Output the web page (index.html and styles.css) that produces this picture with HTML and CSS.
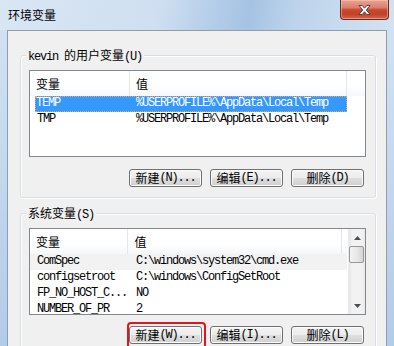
FILE: index.html
```html
<!DOCTYPE html>
<html lang="zh-CN">
<head>
<meta charset="utf-8">
<title>环境变量</title>
<link rel="stylesheet" href="styles.css">
</head>
<body>
<div class="window">
  <div class="titlebar">
    <span class="title">环境变量</span>
    <div class="close">
      <svg width="13" height="10" viewBox="0 0 13 10"><polygon points="1,0.5 4.3,0.5 6.5,3.2 8.7,0.5 12,0.5 8.3,5 12,9.5 8.7,9.5 6.5,6.8 4.3,9.5 1,9.5 4.7,5" fill="#fff" stroke="#3e3e3e" stroke-width="0.9" stroke-linejoin="round"/></svg>
    </div>
  </div>
  <div class="client">
    <div class="group">
      <div class="legend"><span class="lat">kevin </span>的用户变量<span class="lat">(U)</span></div>
      <div class="list">
        <div class="hdr"><div class="hc c1">变量</div><div class="hc c2">值</div><div class="hc rest"></div></div>
        <div class="row sel"><div class="c1 lat">TEMP</div><div class="c2 lat">%USERPROFILE%\AppData\Local\Temp</div></div>
        <div class="row"><div class="c1 lat">TMP</div><div class="c2 lat">%USERPROFILE%\AppData\Local\Temp</div></div>
      </div>
      <div class="buttons">
        <div class="btn">新建<span class="lat">(N)...</span></div>
        <div class="btn">编辑<span class="lat">(E)...</span></div>
        <div class="btn">删除<span class="lat">(D)</span></div>
      </div>
    </div>
    <div class="group g2">
      <div class="legend">系统变量<span class="lat">(S)</span></div>
      <div class="list scroll">
        <div class="lbody">
          <div class="hdr"><div class="hc c1">变量</div><div class="hc c2">值</div><div class="hc rest"></div></div>
          <div class="row hot"><div class="c1 lat">ComSpec</div><div class="c2 lat">C:\windows\system32\cmd.exe</div></div>
          <div class="row"><div class="c1 lat">configsetroot</div><div class="c2 lat">C:\windows\ConfigSetRoot</div></div>
          <div class="row"><div class="c1 lat">FP_NO_HOST_C...</div><div class="c2 lat">NO</div></div>
          <div class="row"><div class="c1 lat">NUMBER_OF_PR</div><div class="c2 lat">2</div></div>
        </div>
        <div class="vscroll">
          <div class="arrow"><svg width="7" height="4" viewBox="0 0 7 4"><polygon points="3.5,0 7,4 0,4" fill="#4f4f4f"/></svg></div>
          <div class="thumb"></div>
          <div class="track"></div>
          <div class="arrow"><svg width="7" height="4" viewBox="0 0 7 4"><polygon points="0,0 7,0 3.5,4" fill="#4f4f4f"/></svg></div>
        </div>
      </div>
      <div class="buttons">
        <div class="btn mark">新建<span class="lat">(W)...</span></div>
        <div class="btn">编辑<span class="lat">(I)...</span></div>
        <div class="btn">删除<span class="lat">(L)</span></div>
      </div>
    </div>
  </div>
</div>
</body>
</html>
```
FILE: styles.css
```css
* { box-sizing: border-box; }
html, body {
  margin: 0;
  padding: 0;
  width: 394px;
  height: 346px;
  overflow: hidden;
}
body {
  font-family: "Noto Sans CJK SC", sans-serif;
  font-size: 12px;
  color: #000;
  background: linear-gradient(to bottom, #d4e3f3 0px, #c6d9ee 150px, #b2cbe7 346px);
}
.lat {
  font-family: "Liberation Mono", "Noto Sans CJK SC", monospace;
  font-size: 12px;
  letter-spacing: -1.2px;
  white-space: pre;
}
.window {
  width: 394px;
  height: 346px;
}
.titlebar {
  height: 30px;
  display: flex;
  align-items: flex-start;
  background: linear-gradient(100deg, #d9e6f4 0%, #cfdff1 40%, #b3cce8 55%, #a6c3e3 63%, #bed4ec 75%, #d3e2f2 100%);
}
.title {
  margin-left: 8px;
  line-height: 30px;
  font-size: 12px;
  color: #000;
}
.close {
  margin-left: auto;
  margin-right: 5px;
  width: 49px;
  height: 20px;
  border: 1px solid #6a2a22;
  border-top: none;
  border-radius: 0 0 4px 4px;
  background: linear-gradient(to bottom, #e8a593 0%, #db7f69 40%, #c9472f 52%, #c24129 75%, #d26a4c 100%);
  box-shadow: inset 0 0 0 1px rgba(255, 210, 200, 0.45);
  display: flex;
  align-items: center;
  justify-content: center;
}
.client {
  margin: 0 7px;
  height: 330px;
  border: 1px solid #8c9eb3;
  background: #f0f0f0;
  padding: 24px 10px 0 12px;
}
.group {
  border: 1px solid #d5dfe5;
  border-radius: 3px;
  padding: 0 9px 10px 8px;
  box-shadow: inset 1px 1px 0 #fff, 1px 1px 0 #fff;
}
.g2 { margin-top: 15px; }
.legend {
  display: table;
  height: 14px;
  line-height: 14px;
  margin: -8px 0 6px -3px;
  padding: 0 2px;
  background: #f0f0f0;
  white-space: nowrap;
}
.list {
  height: 87px;
  border: 1px solid #828790;
  background: #fff;
  overflow: hidden;
}
.list.scroll { display: flex; }
.lbody { flex: 1; overflow: hidden; }
.hdr {
  display: flex;
  height: 25px;
  background: linear-gradient(to bottom, #ffffff 0%, #ffffff 60%, #f6f7f9 100%);
}
.hc {
  line-height: 25px;
  border-right: 1px solid #e3e6ea;
  padding-left: 6px;
}
.hc.c1 { width: 100px; }
.hc.c2 { width: 217px; }
.hc.rest { flex: 1; border-right: none; }
.row {
  display: flex;
  height: 16px;
  line-height: 15px;
  white-space: nowrap;
}
.row .c1 { width: 100px; padding-left: 7px; overflow: hidden; }
.row .c2 { padding-left: 6px; }
.row.sel {
  margin-left: 5px;
  width: 312px;
  background: #3399ff;
  color: #fff;
  outline: 1px dotted #e7a366;
  outline-offset: -1px;
}
.row.sel .c1 { width: 95px; padding-left: 1px; }
.row.hot {
  width: 317px;
  background: #f2f2f2;
}
.vscroll {
  width: 17px;
  display: flex;
  flex-direction: column;
  background: linear-gradient(to right, #e6e6e6 0%, #f2f2f2 20%, #f2f2f2 80%, #e9e9e9 100%);
  border-left: 1px solid #ececec;
}
.arrow {
  height: 17px;
  display: flex;
  align-items: center;
  justify-content: center;
}
.thumb {
  height: 17px;
  margin: 0 1px 0 0;
  border: 1px solid #979797;
  border-radius: 2px;
  background: linear-gradient(to right, #f3f3f3 0%, #e8e8e8 50%, #d6d6d6 100%);
}
.track { flex: 1; }
.buttons {
  display: flex;
  justify-content: flex-end;
  gap: 8px;
  margin: 12px 2px 0 0;
}
.g2 .buttons { margin-top: 11px; }
.btn {
  position: relative;
  width: 73px;
  height: 18px;
  border: 1px solid #707070;
  border-radius: 3px;
  background: linear-gradient(to bottom, #f4f4f4 0%, #ececec 48%, #dedede 52%, #d0d0d0 100%);
  box-shadow: inset 0 0 0 1px #fbfbfb;
  display: flex;
  align-items: center;
  justify-content: center;
  line-height: 16px;
  white-space: nowrap;
}
.btn.mark::after {
  content: "";
  position: absolute;
  left: -3px;
  top: -5px;
  right: -5px;
  bottom: -6px;
  border: 2px solid #e3151c;
  border-radius: 4px;
}
```
